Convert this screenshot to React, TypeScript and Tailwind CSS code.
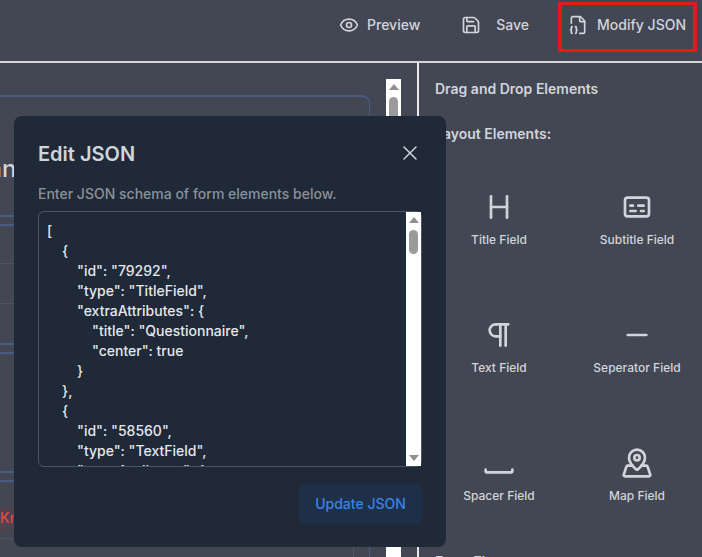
import { Eye, Save, FileJson2, X, Heading, Captions, Pilcrow, Minus, Space, MapPinned } from "lucide-react";
import type { ComponentType } from "react";

const json = `[
\t{
\t\t"id": "79292",
\t\t"type": "TitleField",
\t\t"extraAttributes": {
\t\t\t"title": "Questionnaire",
\t\t\t"center": true
\t\t}
\t},
\t{
\t\t"id": "58560",
\t\t"type": "TextField",
\t\t"extraAttributes": {
\t\t\t"label": "Text Field"
\t\t}
\t}
]`;

function Rule({ blue, mt }: { blue?: boolean; mt: string }) {
  return <div className={`${mt} ${blue ? "h-[2px] bg-[#4a5a82]" : "h-px bg-[#50535e]"}`} />;
}

function Bar({ thumbTop, track }: { thumbTop: string; track: string }) {
  return (
    <div className={`flex w-[15px] shrink-0 flex-col items-center bg-white ${track}`}>
      <div className="mt-[5px] h-0 w-0 border-x-[5px] border-b-[6px] border-x-transparent border-b-[#8f8f8f]" />
      <div className={`${thumbTop} h-[24px] w-[9px] shrink-0 rounded-full bg-[#9a9a9a]`} />
      <div className="flex-1" />
      <div className="mb-[5px] h-0 w-0 border-x-[5px] border-t-[6px] border-x-transparent border-t-[#8f8f8f]" />
    </div>
  );
}

function Tile({ Icon, label }: { Icon: ComponentType<{ className?: string }>; label: string }) {
  return (
    <div className="flex h-[120px] flex-col items-center justify-end gap-[9px] pb-[16px]">
      <Icon className="h-8 w-8 text-[#d1d5db]" />
      <span className="text-xs leading-4 font-medium text-[#d1d5db]">{label}</span>
    </div>
  );
}

export default function App() {
  return (
    <div className="relative flex h-[557px] w-[702px] flex-col overflow-hidden bg-[#434653] font-['Inter',sans-serif]">
      <header className="flex h-[63px] shrink-0 items-start justify-end border-b-2 border-[#d4d5d9] pt-[2px] pr-[5px] text-sm font-medium text-[#d1d5db]">
        <button className="mt-[11px] flex h-[24px] items-center gap-[8px]">
          <Eye className="h-5 w-5" />
          Preview
        </button>
        <button className="mt-[11px] ml-[41px] flex h-[24px] items-center gap-[15px]">
          <Save className="h-5 w-5" />
          Save
        </button>
        <button className="ml-[29px] flex h-[50px] items-center gap-[9px] border-x-4 border-y-[3px] border-[#e5191c] pr-[7px] pb-[4px] pl-[6px]">
          <FileJson2 className="h-5 w-5" />
          Modify JSON
        </button>
      </header>

      <div className="flex min-h-0 flex-1">
        <section className="flex w-[419px] shrink-0 gap-[16px] overflow-hidden border-r-2 border-[#e8e9eb] pr-[15px]">
          <div className="mt-[32px] flex h-[600px] w-[370px] shrink-0 flex-col rounded-tr-lg border-t-2 border-r border-[#4a5a82]">
            <div className="flex h-[118px] items-end pb-[30px]">
              <span className="ml-[-101px] text-2xl leading-8 font-medium text-[#d1d5db]">Questionnaire</span>
            </div>
            <Rule blue mt="mt-0" />
            <Rule blue mt="mt-[7px]" />
            <Rule mt="mt-[37px]" />
            <Rule mt="mt-[39px]" />
            <Rule blue mt="mt-[39px]" />
            <Rule blue mt="mt-[7px]" />
            <Rule blue mt="mt-[117px]" />
            <Rule blue mt="mt-[7px]" />
            <div className="mt-[25px] flex h-[24px] items-center bg-[#51434d] pb-[2px] text-sm font-medium text-[#e04848]">Know</div>
            <Rule mt="mt-[7px]" />
            <div className="mr-[15px] flex-1 border-r border-[#565964]" />
          </div>
          <Bar track="mt-[16px] h-[600px]" thumbTop="mt-[7px]" />
        </section>

        <aside className="flex min-w-0 flex-1 flex-col pt-[16px] pr-px pl-[16px] text-sm font-semibold text-[#d1d5db]">
          <h2 className="leading-5">Drag and Drop Elements</h2>
          <h3 className="mt-[25px] leading-5">Layout Elements:</h3>
          <div className="grid grid-cols-2 gap-x-[10px] gap-y-[8px]">
            <Tile Icon={Heading} label="Title Field" />
            <Tile Icon={Captions} label="Subtitle Field" />
            <Tile Icon={Pilcrow} label="Text Field" />
            <Tile Icon={Minus} label="Seperator Field" />
            <Tile Icon={Space} label="Spacer Field" />
            <Tile Icon={MapPinned} label="Map Field" />
          </div>
          <h3 className="mt-[32px] leading-5">Form Elements:</h3>
        </aside>
      </div>

      <div className="absolute top-[116px] left-[14px] flex h-[431px] w-[432px] flex-col rounded-lg bg-[#1f2937] px-[24px] pt-[24px]">
        <div className="flex h-[26px] items-center justify-between">
          <h2 className="pt-[2px] text-xl font-semibold text-[#d1d5db]">Edit JSON</h2>
          <X className="h-6 w-6 text-[#d1d5db]" strokeWidth={1.5} />
        </div>
        <p className="mt-[18px] text-sm leading-5 font-medium text-[#8b919c]">Enter JSON schema of form elements below.</p>
        <div className="mt-[7px] flex h-[256px] items-stretch rounded-md border border-[#4b5563]">
          <pre className="min-w-0 flex-1 overflow-hidden px-[8px] pt-[9px] font-['Inter',sans-serif] text-sm leading-5 font-medium text-[#e5e7eb] [tab-size:15px]">{json}</pre>
          <Bar track="h-full" thumbTop="mt-[7px]" />
        </div>
        <div className="mt-[17px] flex justify-end">
          <button className="h-[40px] w-[123px] rounded-md bg-[#1e3047] text-sm font-medium text-[#3b82e6]">Update JSON</button>
        </div>
      </div>
    </div>
  );
}
